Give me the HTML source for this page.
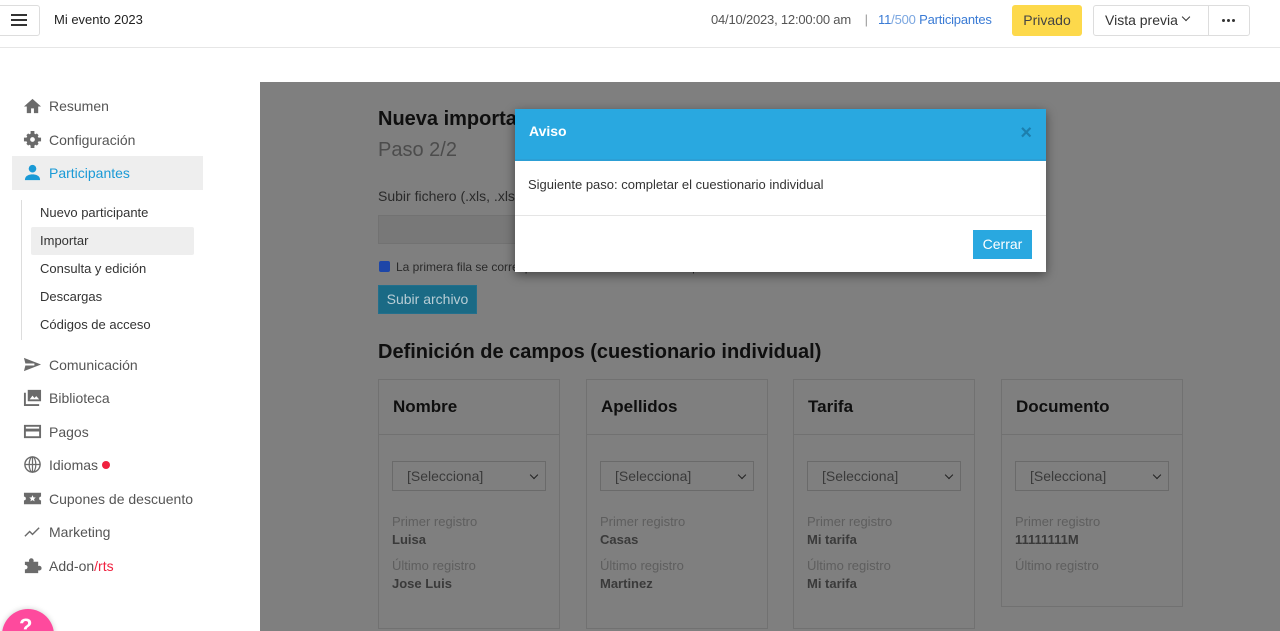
<!DOCTYPE html>
<html style="overflow:hidden;height:631px"><head><meta charset="utf-8"><style>
*{box-sizing:border-box;margin:0;padding:0}
html,body{width:1280px;height:631px;overflow:hidden}
body{background:#fff;font-family:"Liberation Sans",sans-serif;position:relative;color:#222}
.abs{position:absolute}
.top{left:0;top:0;width:1280px;height:48px;border-bottom:1px solid #e6e6e6}
.nav{font-size:14px;color:#555;display:flex;align-items:center;gap:7px}
.nav svg{width:19px;height:19px;fill:#6b6b6b}
.sub{font-size:13px;color:#333}
.ov{left:260px;top:82px;width:1020px;height:549px;background:#7f7f7f;overflow:hidden}
.card{position:absolute;top:297px;width:182px;height:250px;border:1px solid #717171}
.card h3{font-size:17px;font-weight:bold;color:#0f0f0f;padding:17px 14px 0;height:55px;border-bottom:1px solid #717171}
.sel{margin:26px 0 0 13px;width:154px;height:30px;border:1px solid #6a6a6a;font-size:14px;color:#3a3a3a;padding:6px 0 0 14px;position:relative}
.sel:after{content:"";position:absolute;right:8px;top:10px;width:5px;height:5px;border-right:1.5px solid #222;border-bottom:1.5px solid #222;transform:rotate(45deg)}
.lab{font-size:13px;color:#5e5e5e;margin-left:13px;line-height:18px}
.val{font-size:13px;color:#3a3a3a;font-weight:bold;margin-left:13px;line-height:18px}
</style></head><body>
<div class="abs top">
 <div class="abs" style="left:-4px;top:5px;width:44px;height:31px;border:1px solid #ddd;border-radius:3px"></div>
 <div class="abs" style="left:11px;top:14px;width:16px;height:2px;background:#333;box-shadow:0 5px 0 #333,0 10px 0 #333"></div>
 <div class="abs" style="left:54px;top:12px;font-size:13px;color:#222">Mi evento 2023</div>
 <div class="abs" style="left:711px;top:12px;font-size:13px;color:#555;letter-spacing:-0.2px">04/10/2023, 12:00:00 am &nbsp;&nbsp; <span style="color:#999">|</span> &nbsp;&nbsp;<span style="color:#3a7bd5">11</span><span style="color:#7aa6e0">/500</span> <span style="color:#3a7bd5">Participantes</span></div>
 <div class="abs" style="left:1012px;top:5px;width:70px;height:31px;background:#fdd94b;border-radius:3px;font-size:14px;color:#444;text-align:center;line-height:31px">Privado</div>
 <div class="abs" style="left:1093px;top:5px;width:157px;height:31px;border:1px solid #ddd;border-radius:3px"></div>
 <div class="abs" style="left:1208px;top:5px;width:1px;height:31px;background:#ddd"></div>
 <div class="abs" style="left:1105px;top:12px;font-size:14px;color:#333">Vista previa</div>
 <div class="abs" style="left:1183px;top:14px;width:6px;height:6px;border-right:1.5px solid #333;border-bottom:1.5px solid #333;transform:rotate(45deg)"></div>
 <div class="abs" style="left:1222px;top:19px;width:3px;height:3px;background:#333;border-radius:50%;box-shadow:5px 0 0 #333,10px 0 0 #333"></div>
</div>
<div class="abs" style="left:12px;top:156px;width:191px;height:34px;background:#eee"></div>
<div class="abs" style="left:31px;top:227px;width:163px;height:28px;background:#eee;border-radius:2px"></div>
<div class="abs" style="left:21px;top:200px;width:1px;height:140px;background:#ddd"></div>
<div class="abs nav" style="left:23px;top:96px"><svg viewBox="0 0 20 20"><path d="M10 3 1 11h3v7h4.5v-5h3v5H16v-7h3z"/></svg>Resumen</div>
<div class="abs nav" style="left:23px;top:130px"><svg viewBox="0 0 20 20"><circle cx="10" cy="10" r="6.5"/><circle cx="10" cy="10" r="2.5" fill="#fff"/><path d="M8 1h4v4H8zM8 15h4v4H8zM1 8h4v4H1zM15 8h4v4h-4zM3.5 5.5l2-2 3 3-2 2zM14.5 16.5l2-2-3-3-2 2zM3.5 14.5l2 2 3-3-2-2zM16.5 5.5l-2-2-3 3 2 2z"/></svg>Configuración</div>
<div class="abs nav" style="left:23px;top:163px;color:#1a9ad6"><svg viewBox="0 0 20 20" style="fill:#1a9ad6"><circle cx="10" cy="6" r="4"/><path d="M2 18c0-5 5-6 8-6s8 1 8 6z"/></svg>Participantes</div>
<div class="abs sub" style="left:40px;top:205px">Nuevo participante</div>
<div class="abs sub" style="left:40px;top:233px">Importar</div>
<div class="abs sub" style="left:40px;top:261px">Consulta y edición</div>
<div class="abs sub" style="left:40px;top:289px">Descargas</div>
<div class="abs sub" style="left:40px;top:317px">Códigos de acceso</div>
<div class="abs nav" style="left:23px;top:355px"><svg viewBox="0 0 20 20"><path d="M1 3l18 7-18 7 1.5-6H12V9H2.5z"/></svg>Comunicación</div>
<div class="abs nav" style="left:23px;top:388px"><svg viewBox="0 0 20 20"><path d="M5 2h14v12H5zM1 5h2v12h14v2H1z"/><path d="M7 12l3-4 2 2.5 2-2 3 3.5z" fill="#fff"/></svg>Biblioteca</div>
<div class="abs nav" style="left:23px;top:422px"><svg viewBox="0 0 20 20"><path d="M1 3h18v14H1zm2 2v2h14V5zm0 5v5h14v-5z"/></svg>Pagos</div>
<div class="abs nav" style="left:23px;top:455px"><svg viewBox="0 0 20 20"><circle cx="10" cy="10" r="8" fill="none" stroke="#6b6b6b" stroke-width="1.5"/><path d="M2 10h16M10 2v16" stroke="#6b6b6b" stroke-width="1.3"/><ellipse cx="10" cy="10" rx="3.5" ry="8" fill="none" stroke="#6b6b6b" stroke-width="1.3"/></svg>Idiomas <span style="width:8px;height:8px;border-radius:50%;background:#f0213f;margin-left:-3px"></span></div>
<div class="abs nav" style="left:23px;top:489px"><svg viewBox="0 0 20 20"><path d="M1 4h18v4a2 2 0 0 0 0 4v4H1v-4a2 2 0 0 0 0-4z"/><path d="M10 6.5l1 2.3 2.4.2-1.8 1.6.6 2.4-2.2-1.3-2.2 1.3.6-2.4L6.6 9l2.4-.2z" fill="#fff"/></svg>Cupones de descuento</div>
<div class="abs nav" style="left:23px;top:522px"><svg viewBox="0 0 20 20"><path d="M2 15l5-5 3 3 7-7" fill="none" stroke="#6b6b6b" stroke-width="1.5"/></svg>Marketing</div>
<div class="abs nav" style="left:23px;top:556px"><svg viewBox="0 0 20 20"><path d="M2 6h4.5a2.5 2.5 0 1 1 4.5 0H16v4.5a2.5 2.5 0 1 1 0 4.5V18H2v-4a2.3 2.3 0 1 0 0-4.5z"/></svg><span>Add-on<span style="color:#f0213f">/rts</span></span></div>
<div class="abs" style="left:2px;top:609px;width:52px;height:52px;border-radius:50%;background:#fe4a9d;box-shadow:0 0 6px rgba(0,0,0,.2)"></div>
<div class="abs" style="left:19px;top:614px;font-size:22px;font-weight:bold;color:#fff">?</div>

<div class="abs ov">
 <div class="abs" style="left:118px;top:26px;font-size:20px;font-weight:bold;color:#0f0f0f">Nueva importación</div>
 <div class="abs" style="left:118px;top:57px;font-size:20px;color:#4c4c4c">Paso 2/2</div>
 <div class="abs" style="left:118px;top:106px;font-size:14px;color:#2a2a2a">Subir fichero (.xls, .xlsx)</div>
 <div class="abs" style="left:118px;top:133px;width:300px;height:29px;border:1px solid #727272;background:#787878"></div>
 <div class="abs" style="left:119px;top:179px;width:11px;height:11px;background:#1d46a8;border-radius:2px"></div>
 <div class="abs" style="left:136px;top:178px;font-size:12px;color:#2a2a2a">La primera fila se corresponde con los nombres de campo</div>
 <div class="abs" style="left:118px;top:203px;width:99px;height:29px;background:#1a6a85;border:1px solid #236f8c;color:#b8cdd5;font-size:14px;text-align:center;line-height:27px">Subir archivo</div>
 <div class="abs" style="left:118px;top:259px;font-size:20px;font-weight:bold;color:#0f0f0f">Definición de campos (cuestionario individual)</div>
 <div class="card" style="left:118px"><h3>Nombre</h3><div class="sel">[Selecciona]</div><div class="lab" style="margin-top:22px">Primer registro</div><div class="val">Luisa</div><div class="lab" style="margin-top:8px">Último registro</div><div class="val">Jose Luis</div></div>
 <div class="card" style="left:326px"><h3>Apellidos</h3><div class="sel">[Selecciona]</div><div class="lab" style="margin-top:22px">Primer registro</div><div class="val">Casas</div><div class="lab" style="margin-top:8px">Último registro</div><div class="val">Martinez</div></div>
 <div class="card" style="left:533px"><h3>Tarifa</h3><div class="sel">[Selecciona]</div><div class="lab" style="margin-top:22px">Primer registro</div><div class="val">Mi tarifa</div><div class="lab" style="margin-top:8px">Último registro</div><div class="val">Mi tarifa</div></div>
 <div class="card" style="left:741px;height:228px"><h3>Documento</h3><div class="sel">[Selecciona]</div><div class="lab" style="margin-top:22px">Primer registro</div><div class="val">11111111M</div><div class="lab" style="margin-top:8px">Último registro</div></div>
</div>

<div class="abs" style="left:515px;top:109px;width:531px;height:163px;background:#fff;box-shadow:0 3px 10px rgba(0,0,0,.45)">
 <div style="height:52px;background:#29a8e0;border-bottom:2px solid #2c9fd5;position:relative">
  <div class="abs" style="left:14px;top:14px;font-size:14px;font-weight:bold;color:#fff">Aviso</div>
  <div class="abs" style="right:14px;top:13px;font-size:20px;font-weight:bold;color:#1c7fae">×</div>
 </div>
 <div style="height:55px;border-bottom:1px solid #e5e5e5;padding:16px 13px;font-size:13px;color:#333">Siguiente paso: completar el cuestionario individual</div>
 <div class="abs" style="left:458px;top:121px;width:59px;height:29px;background:#29a8e0;color:#fff;font-size:14px;text-align:center;line-height:29px">Cerrar</div>
</div>
</body></html>
